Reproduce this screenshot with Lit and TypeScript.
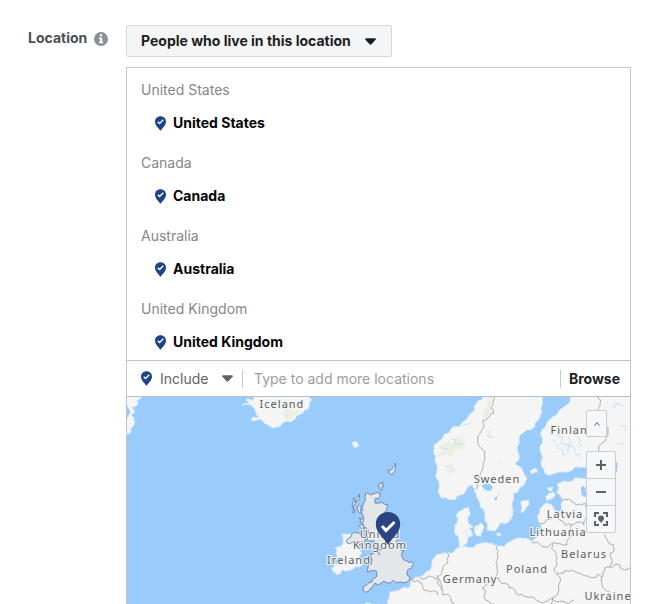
import { LitElement, html, css, svg } from "lit";
import { customElement } from "lit/decorators.js";

type Point = [number, number];

/** Parses "x,y x,y" pairs. */
const parse = (text: string): Point[] =>
  text.trim().split(/\s+/).map((pair) => pair.split(",").map(Number) as Point);

/** Repeatable noise in the range -0.5 to 0.5. */
const noise = (x: number, y: number) => {
  const n = Math.sin(x * 12.9898 + y * 78.233) * 43758.5453;
  return n - Math.floor(n) - 0.5;
};

/** Breaks every segment into smaller uneven ones, so that borders look natural. */
const rough = (text: string, closed: boolean, amount: number): string => {
  let points = parse(text);
  for (let pass = 0; pass < 2; pass++) {
    const next: Point[] = [];
    const count = closed ? points.length : points.length - 1;
    for (let i = 0; i < count; i++) {
      const [ax, ay] = points[i];
      const [bx, by] = points[(i + 1) % points.length];
      const length = Math.hypot(bx - ax, by - ay);
      const shift = noise(ax + bx, ay + by) * amount;
      next.push([ax, ay]);
      if (length > 3 && length < 60) {
        next.push([
          (ax + bx) / 2 - (shift * (by - ay)),
          (ay + by) / 2 + (shift * (bx - ax)),
        ]);
      }
    }
    if (!closed) next.push(points[points.length - 1]);
    points = next;
  }
  const d = points.map(([x, y]) => `${x.toFixed(1)} ${y.toFixed(1)}`).join("L");
  return `M${d}${closed ? "Z" : ""}`;
};

const LAND = [
  // Greenland
  "120,390 141,397 136,400 137,405 132,407 135,412 131,415 134,420 132,427 127,434 120,434",
  // Iceland
  "242,405 249,403 246,400 249,399 255,400 253,390 308,390 312,400 309,407 300,414 293,420 284,422 277,427 268,425 263,421 251,420 253,417 259,417 256,413 253,407",
  // Norway and Sweden
  "492,390 482,400 475,410 463,422 453,427 443,437 434,445 435,460 436,477 438,492 448,499 460,495 470,485 473,485 476,493 480,507 485,520 487,530 495,531 500,523 508,522 512,507 513,493 520,487 527,478 523,472 515,463 517,447 523,433 535,422 540,415 543,407 542,390",
  // Finland and Russia
  "568,390 567,405 553,417 542,430 540,447 542,467 550,475 567,472 585,467 596,462 612,470 600,474 585,479 567,482 557,485 557,493 562,498 562,510 557,512 552,505 547,503 540,513 539,523 538,537 532,543 520,538 510,542 497,546 492,543 483,543 470,548 462,547 468,537 467,530 473,527 468,522 470,513 468,507 462,510 456,515 455,530 459,538 459,548 453,553 445,553 435,557 432,567 420,577 410,587 400,590 390,592 388,600 386,612 700,700 700,390",
  // Ireland
  "342,535 350,534 362,536 362,553 362,565 350,570 337,575 332,568 340,562 337,555 335,547 343,544",
  // Danish islands
  "466,531 471,530 473,535 469,537",
  "475,527 481,523 484,528 481,536 476,535",
  "497,533 501,534 500,536 497,535",
  // Gotland and Öland
  "521,502 528,500 525,509 522,513",
  "511,513 513,508 510,519 508,522",
  // Saaremaa and Hiiumaa
  "546,496 553,492 555,495 548,501",
  "548,488 553,487 552,491 548,490",
  // Åland
  "530,471 535,468 537,472 532,474",
  // Faroe Islands
  "352,443 357,442 359,446 355,448",
  // Brittany
  "362,610 366,603 380,604 386,612",
];

const BRITAIN = [
  "368,493 378,492 380,497 375,503 388,505 387,510 382,518 388,527 395,537 400,547 402,557 412,562 412,568 407,575 410,578 400,582 387,583 375,583 372,588 363,590 372,582 377,575 367,572 368,567 372,560 370,555 380,555 382,547 377,543 371,541 367,535 368,530 362,527 363,518 362,507 365,498",
  "347,540 353,533 359,533 363,537 365,542 360,545 354,542 349,544",
  "353,498 359,494 358,500 354,502",
  "352,506 356,501 355,512 353,513",
  "357,507 362,507 362,513 358,511",
  "359,518 364,519 362,523 360,522",
  "359,526 364,525 361,530",
  "379,484 383,482 384,486 381,491 379,488",
  "388,470 393,467 395,463 396,466 392,475 389,473",
];

const LAKES = [
  "482,486 488,483 494,486 490,491 485,490",
  "494,498 499,490 497,498 495,501",
  "581,488 584,486 585,497 582,495",
  "601,472 610,463 616,460 618,467 613,474",
  "541,408 546,397 568,390 567,404 561,407 555,414 546,418 540,430",
];

const BORDERS = [
  "497,390 493,402 494,413 489,417 483,420 481,432 482,449 484,462 481,472 476,481 476,489",
  "597,397 600,406 598,412 605,424 608,433 603,442 598,452",
  "447,553 448,561 443,569 437,576 440,586 443,595 455,604",
  "420,577 428,576 435,579 440,580 441,590",
  "497,546 498,556 497,565 499,579 490,582 482,588 484,597 494,604",
  "499,579 507,584 514,589 522,594 533,597 552,598",
  "532,543 552,543 556,552 557,563 556,573 560,582 552,598 550,608",
  "539,523 550,519 562,521 571,525 571,535 567,545 552,543",
  "562,501 571,500 577,505 585,503",
  "585,503 587,514 584,525 571,525",
  "557,573 565,570 577,573 587,576 598,574 602,577",
  "605,534 608,542 614,550 611,558 609,567 603,572 602,586 610,592",
  "609,567 620,565 622,569 632,568",
  "410,578 418,580 423,588 430,592 438,595",
  "552,598 562,601 574,600",
];

const MARKS = [
  "451,439 462,445", "445,466 454,465", "438,456 445,454", "439,448 448,449",
  "463,426 470,423", "487,430 494,437", "498,460 501,463", "556,435 568,452",
  "568,437 575,451", "557,448 566,456", "577,437 582,446", "552,440 560,446",
  "575,452 580,459", "599,421 604,428", "615,401 624,406", "620,425 625,431",
  "612,407 618,402", "617,443 624,444", "571,428 575,431", "565,443 570,448",
];

const LABELS: [number, number, string][] = [
  [282, 408, "Iceland"],
  [573, 434, "Finland"],
  [497, 483, "Sweden"],
  [565, 518, "Latvia"],
  [558, 536, "Lithuania"],
  [584, 558, "Belarus"],
  [527, 573, "Poland"],
  [470, 583, "Germany"],
  [608, 600, "Ukraine"],
  [349, 564, "Ireland"],
  [380, 538, "United"],
  [380, 549, "Kingdom"],
];

const COUNTRIES = ["United States", "Canada", "Australia", "United Kingdom"];

const pin = html`
  <svg class="pin" viewBox="0 0 24 32" aria-hidden="true">
    <path fill="#1d4486" d="M12 0C5 0 0 5 0 12c0 8 8 14 12 20 4-6 12-12 12-20C24 5 19 0 12 0Z" />
    <path fill="none" stroke="#fff" stroke-width="3" d="m6 12 4 4 8-8" />
  </svg>
`;

const caret = html`
  <svg class="caret" viewBox="0 0 12 7" aria-hidden="true">
    <path fill="currentColor" d="M1.200 0h9.600c1 0 1.400 1 .8 1.700L7 6.500c-.6.600-1.400.600-2 0L.4 1.700C-.2 1 .2 0 1.200 0Z" />
  </svg>
`;

@customElement("location-map")
export class LocationMap extends LitElement {
  static styles = css`
    :host {
      position: relative;
      display: block;
      overflow: hidden;
      background: #99ccfb;
    }
    .map {
      position: absolute;
      inset: 0;
      width: 100%;
      height: 100%;
    }
    .land { fill: #f4f5f4; stroke: #e3eef6; }
    .lake { fill: #99ccfb; }
    .green { fill: #e2eddb; opacity: 0.7; }
    .selected { fill: #e3e7ea; stroke: #7189b0; }
    .border { fill: none; stroke: #adafb1; }
    .mark { fill: none; stroke: #c9e0f3; }
    .name {
      font: 11px "Noto Sans", "Open Sans", sans-serif;
      letter-spacing: 1px;
      text-anchor: middle;
      fill: #595c60;
      stroke: #f6f7f7;
      stroke-width: 2px;
      stroke-linejoin: round;
      paint-order: stroke;
    }
    .marker { fill: #2b4481; }
    .tick { fill: none; stroke: #fff; stroke-width: 3px; }
    .controls {
      position: absolute;
      top: 13px;
      right: 14px;
      display: flex;
      flex-direction: column;
      align-items: flex-start;
      gap: 14px;
    }
    .zoom {
      display: flex;
      flex-direction: column;
      border: 1px solid #c9ccd1;
      border-radius: 2px;
      background: #f6f7f9;
    }
    button {
      display: grid;
      place-items: center;
      box-sizing: border-box;
      width: 28px;
      height: 26px;
      margin: 0;
      padding: 0;
      border: 0;
      background: #f6f7f9;
      color: #5d6066;
    }
    .zoom button + button {
      height: 27px;
      border-top: 1px solid #c9ccd1;
    }
    .collapse {
      width: 21px;
      height: 27px;
      border: 1px solid #c9ccd1;
      border-radius: 2px;
    }
    .glyph {
      width: 16px;
      height: 16px;
      fill: none;
      stroke: currentColor;
      stroke-width: 2px;
    }
    .thin { stroke-width: 1px; }
    .solid { fill: currentColor; stroke: none; }
  `;

  render() {
    return html`
      <svg class="map" viewBox="127 397 503 207" preserveAspectRatio="xMidYMin slice" role="img" aria-label="Map of northern Europe">
        ${LAND.map((shape) => svg`<path class="land" d=${rough(shape, true, 0.5)} />`)}
        <path class="green" d=${rough("445,443 455,437 463,441 466,447 457,450 449,456", true, 0.8)} />
        <path class="green" d=${rough("446,470 453,467 455,472 450,476", true, 0.8)} />
        <path class="green" d=${rough("487,399 493,397 493,410 488,418 483,414", true, 0.8)} />
        <path class="green" d=${rough("282,410 296,409 302,411 292,418 284,416", true, 0.8)} />
        ${LAKES.map((shape) => svg`<path class="lake" d=${rough(shape, true, 0.5)} />`)}
        ${MARKS.map((line) => svg`<path class="mark" d=${rough(line, false, 0.9)} />`)}
        ${BORDERS.map((line) => svg`<path class="border" d=${rough(line, false, 0.6)} />`)}
        ${BRITAIN.map((shape) => svg`<path class="selected" d=${rough(shape, true, 0.7)} />`)}
        <path class="green" d=${rough("372,511 380,508 382,513 377,517 372,516", true, 0.5)} />
        ${LABELS.map(([x, y, name]) => svg`<text class="name" x=${x} y=${y}>${name}</text>`)}
        <path class="marker" d="M388 512c-7 0-12.200 5.300-12.200 12 0 9 8.200 13.500 12.200 21 4-7.500 12.200-12 12.200-21 0-6.700-5.200-12-12.200-12Z" />
        <path class="tick" d="m382 526 4 4.500 8.500-8.500" />
      </svg>
      <div class="controls">
        <button class="collapse" type="button" aria-label="Collapse map">
          <svg class="glyph thin" viewBox="0 0 16 16"><path d="m5.500 9.500 2.500-3 2.500 3" /></svg>
        </button>
        <div class="zoom">
          <button type="button" aria-label="Zoom in">
            <svg class="glyph" viewBox="0 0 16 16"><path d="M3 8h10M8 3v10" /></svg>
          </button>
          <button type="button" aria-label="Zoom out">
            <svg class="glyph" viewBox="0 0 16 16"><path d="M3 8h10" /></svg>
          </button>
          <button type="button" aria-label="Fit to pins">
            <svg class="glyph" viewBox="0 0 16 16">
              <path d="M2 6V2h4M10 2h4v4M14 10v4h-4M6 14H2v-4" />
              <path class="solid" d="M8 4.500A3 3 0 0 0 5 7.500c0 2 2 2.500 3 4.500 1-2 3-2.500 3-4.500a3 3 0 0 0-3-3Z" />
            </svg>
          </button>
        </div>
      </div>
    `;
  }
}

@customElement("app-root")
export class AppRoot extends LitElement {
  static styles = css`
    :host {
      display: flex;
      box-sizing: border-box;
      min-height: 100vh;
      padding: 25px 25px 0 28px;
      background: #fff;
      color: #1c1e21;
      font: 14px/22px Inter, "Liberation Sans", sans-serif;
    }
    .heading {
      display: flex;
      align-items: flex-start;
      gap: 7px;
      flex: 0 0 98px;
      padding-top: 2px;
    }
    .title {
      color: #4b4f56;
      font-weight: 700;
    }
    .info {
      width: 14px;
      height: 14px;
      margin-top: 5px;
    }
    .field {
      display: flex;
      flex: 1;
      flex-direction: column;
      align-items: flex-start;
      gap: 10px;
      min-width: 0;
    }
    .dropdown {
      display: inline-grid;
      align-items: center;
    }
    .dropdown > * { grid-area: 1 / 1; }
    select {
      appearance: none;
      box-sizing: border-box;
      margin: 0;
      border: 0;
      background: none;
      color: inherit;
      font: inherit;
    }
    .audience {
      height: 32px;
      padding: 0 40px 0 14px;
      border: 1px solid #d4d7dc;
      border-radius: 2px;
      background: #f3f5f7;
      font-weight: 700;
    }
    .caret {
      justify-self: end;
      width: 11px;
      height: 7px;
      margin-right: 16px;
      pointer-events: none;
    }
    .panel {
      display: flex;
      flex: 1;
      flex-direction: column;
      align-self: stretch;
      border: 1px solid #c3c5ca;
      border-bottom: 0;
    }
    .groups {
      display: flex;
      flex-direction: column;
      gap: 18px;
      margin: 0;
      padding: 11px 14px 7px;
      border-bottom: 1px solid #bcc3cb;
      list-style: none;
    }
    .group {
      display: flex;
      flex-direction: column;
      gap: 11px;
      color: #85878b;
    }
    .place {
      display: flex;
      align-items: center;
      gap: 7px;
      padding-left: 14px;
      color: #050505;
      font-weight: 700;
    }
    .pin {
      flex: none;
      width: 11px;
      height: 15px;
    }
    .toolbar {
      display: flex;
      align-items: center;
      height: 35px;
      padding: 0 10px 0 14px;
      border-bottom: 1px solid #b5bfcc;
    }
    .mode { color: #606469; }
    .include {
      padding: 0 32px 0 8px;
    }
    .mode .caret {
      margin-right: 8px;
    }
    .search {
      flex: 1;
      min-width: 0;
      height: 18px;
      margin: 0 0 0 1px;
      padding: 0 11px;
      border: solid #c5c8cd;
      border-width: 0 1px;
      outline: 0;
      background: none;
      color: inherit;
      font: inherit;
    }
    .search::placeholder { color: #9b9da1; opacity: 1; }
    .browse {
      margin: 0;
      padding: 0 0 0 8px;
      border: 0;
      background: none;
      color: inherit;
      font: inherit;
      font-weight: 700;
    }
    location-map {
      flex: 1;
      min-height: 200px;
    }
  `;

  render() {
    return html`
      <div class="heading">
        <label class="title" for="audience">Location</label>
        <svg class="info" viewBox="0 0 14 14" role="img" aria-label="Information">
          <circle cx="7" cy="7" r="7" fill="#8c8f96" />
          <path fill="#fff" d="M5.800 2.300h2.400v2H5.800zM5 5.500h3.200v4.200H9.300v1.600H4.900V9.700H6V7H5z" />
        </svg>
      </div>
      <div class="field">
        <div class="dropdown">
          <select class="audience" id="audience">
            <option>People who live in this location</option>
          </select>
          ${caret}
        </div>
        <div class="panel">
          <ul class="groups">
            ${COUNTRIES.map(
              (name) => html`
                <li class="group">
                  <span>${name}</span>
                  <span class="place">${pin}${name}</span>
                </li>
              `,
            )}
          </ul>
          <div class="toolbar">
            ${pin}
            <div class="dropdown mode">
              <select class="include" aria-label="Include or exclude">
                <option>Include</option>
              </select>
              ${caret}
            </div>
            <input class="search" type="text" aria-label="Add locations" placeholder="Type to add more locations" />
            <button class="browse" type="button">Browse</button>
          </div>
          <location-map></location-map>
        </div>
      </div>
    `;
  }
}
